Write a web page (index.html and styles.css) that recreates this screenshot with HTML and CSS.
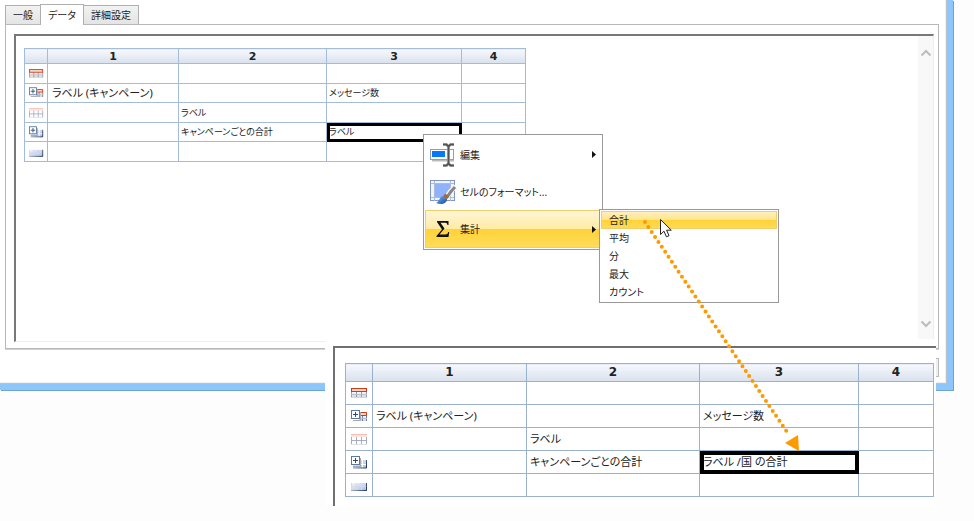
FILE: index.html
```html
<!DOCTYPE html>
<html lang="ja">
<head>
<meta charset="utf-8">
<title>データ</title>
<link rel="stylesheet" href="styles.css">
</head>
<body>
<svg class="defs" aria-hidden="true">
  <defs>
    <linearGradient id="fade" x1="0" y1="0" x2="0" y2="1"><stop offset="0" stop-color="#fff"/><stop offset="1" stop-color="#d4d4d6"/></linearGradient>
    <linearGradient id="navy" gradientUnits="userSpaceOnUse" x1="0" y1="3" x2="16" y2="12"><stop offset="0" stop-color="#d5dbe6"/><stop offset="1" stop-color="#1c3158"/></linearGradient>
    <linearGradient id="cells" x1="0" y1="0" x2="1" y2="1"><stop offset="0" stop-color="#f4f6fb"/><stop offset="1" stop-color="#a3b9ea"/></linearGradient>
    <linearGradient id="brush" x1="0" y1="0" x2="1" y2="1"><stop offset="0" stop-color="#7eb2ed"/><stop offset="1" stop-color="#164d9e"/></linearGradient>
    <g id="plus">
      <path d="M2 10.500h7.500V2" fill="none" stroke="#a4a7ae"/>
      <rect x="0.500" y="0.500" width="8" height="8" fill="#fff" stroke="#5c789c"/>
      <path d="M2 4.500h5M4.500 2v5" stroke="#304b74"/>
    </g>
    <symbol id="i-head" viewBox="0 0 17 13">
      <path d="M0 4h16v7H0z" fill="url(#fade)"/><path d="M.5 4v6M5.500 4v6M10.500 4v6M15.500 4v6" stroke="#8c9ab8" fill="none"/><path d="M0 7.500h16" stroke="#b9c0cf"/>
      <rect x="0.500" y="1.500" width="15" height="3" fill="#fbd5c8" stroke="#d43a10"/>
    </symbol>
    <symbol id="i-grouphead" viewBox="0 0 17 13">
      <path d="M8 5h8v6H8z" fill="url(#fade)"/><path d="M11.500 5v6M15.500 5v6" stroke="#6f82a8" fill="none"/><path d="M8 8.500h8" stroke="#b9c0cf"/>
      <path d="M8 2.500h7.500v3H8" fill="#fbd5c8" stroke="#d43a10"/>
      <use href="#plus"/>
    </symbol>
    <symbol id="i-detail" viewBox="0 0 17 13">
      <path d="M0 1.500h16" stroke="#f4bdb4"/><path d="M0 3h16" stroke="#fbe4df" stroke-width="2"/>
      <path d="M.5 4v8M5.500 4v8M10.500 4v8M15.500 4v8M0 7.500h16" stroke="#a5aec1" fill="none"/><path d="M0 11.500h16" stroke="#dfe2e9"/>
    </symbol>
    <symbol id="i-groupfoot" viewBox="0 0 17 13">
      <path d="M2 4h14v8H2z" fill="url(#cells)"/><path d="M11.500 4v8M6 8.500h10" stroke="#fff"/><path d="M2 12h13.500V4" fill="none" stroke="url(#navy)" stroke-width="1"/>
      <use href="#plus"/>
    </symbol>
    <symbol id="i-foot" viewBox="0 0 17 13">
      <path d="M0 4h16v8H0z" fill="url(#cells)"/><path d="M.5 4v8M5.500 4v8M10.500 4v8M0 7.500h16" stroke="#d5dae4" fill="none"/><path d="M0 11.500h15.500V4" fill="none" stroke="url(#navy)"/>
    </symbol>
  </defs>
</svg>

<main class="stage">
  <section class="window">
    <nav class="tabs">
      <button class="tab" type="button">一般</button>
      <button class="tab tab-active" type="button">データ</button>
      <button class="tab" type="button">詳細設定</button>
    </nav>
    <div class="panel">
      <div class="editor">
        <table class="grid">
          <colgroup><col class="c-icon"><col class="c-one"><col class="c-two"><col class="c-three"><col class="c-four"></colgroup>
          <thead><tr><th></th><th>1</th><th>2</th><th>3</th><th>4</th></tr></thead>
          <tbody>
            <tr><td class="mark"><svg><use href="#i-head"/></svg></td><td></td><td></td><td></td><td></td></tr>
            <tr><td class="mark"><svg><use href="#i-grouphead"/></svg></td><td class="large">ラベル (キャンペーン)</td><td></td><td>メッセージ数</td><td></td></tr>
            <tr><td class="mark"><svg><use href="#i-detail"/></svg></td><td></td><td>ラベル</td><td></td><td></td></tr>
            <tr><td class="mark"><svg><use href="#i-groupfoot"/></svg></td><td></td><td>キャンペーンごとの合計</td><td class="selected">ラベル</td><td></td></tr>
            <tr><td class="mark"><svg><use href="#i-foot"/></svg></td><td></td><td></td><td></td><td></td></tr>
          </tbody>
        </table>
        <div class="scrollbar">
          <button type="button" aria-label="上へ"><svg viewBox="0 0 12 8"><path d="M1.500 6.500 6 2l4.500 4.500"/></svg></button>
          <button type="button" aria-label="下へ"><svg viewBox="0 0 12 8"><path d="M1.500 1.500 6 6l4.500-4.500"/></svg></button>
        </div>
      </div>
    </div>
    <div class="actions"><button type="button" aria-label="OK"></button></div>
  </section>

  <section class="result">
    <div class="result-frame">
      <table class="grid grid-big">
        <colgroup><col class="c-icon"><col class="c-one"><col class="c-two"><col class="c-three"><col class="c-four"></colgroup>
        <thead><tr><th></th><th>1</th><th>2</th><th>3</th><th>4</th></tr></thead>
        <tbody>
          <tr><td class="mark"><svg><use href="#i-head"/></svg></td><td></td><td></td><td></td><td></td></tr>
          <tr><td class="mark"><svg><use href="#i-grouphead"/></svg></td><td>ラベル (キャンペーン)</td><td></td><td>メッセージ数</td><td></td></tr>
          <tr><td class="mark"><svg><use href="#i-detail"/></svg></td><td></td><td>ラベル</td><td></td><td></td></tr>
          <tr><td class="mark"><svg><use href="#i-groupfoot"/></svg></td><td></td><td>キャンペーンごとの合計</td><td class="selected">ラベル /国 の合計</td><td></td></tr>
          <tr><td class="mark"><svg><use href="#i-foot"/></svg></td><td></td><td></td><td></td><td></td></tr>
        </tbody>
      </table>
    </div>
  </section>

  <div class="menu">
    <button class="menu-item" type="button">
      <svg class="menu-icon" viewBox="0 0 28 28"><path d="M3 19.500h22" stroke="#bbb" stroke-width="2"/><rect x="1.500" y="8.500" width="23" height="10" fill="#fff" stroke="#8d9cc0"/><rect x="3" y="10" width="13" height="6" fill="#0879f5"/><path d="M14 3.500h3.500l2 2 2-2H25M19.500 5v18M14 24.500h3.500l2-2 2 2H25" fill="none" stroke="#ccc" stroke-width="3"/><path d="M14 3.500h3.500l2 2 2-2H25M19.500 5v18M14 24.500h3.500l2-2 2 2H25" fill="none" stroke="#555" stroke-width="2"/></svg>
      <span>編集</span>
      <svg class="more" viewBox="0 0 4 7"><path d="M0 0l4 3.500L0 7z"/></svg>
    </button>
    <button class="menu-item" type="button">
      <svg class="menu-icon" viewBox="0 0 28 28"><rect x="1.500" y="2.500" width="24" height="20" fill="#eef5ff" stroke="#8296c0"/><path d="M5.500 3v20M21.500 3v20M2 5.500h23M2 19.500h23" stroke="#a9bbe2" fill="none"/><rect x="6" y="6" width="15" height="13" fill="#8fb2fa"/><path d="M27 9c-5 3-8 7-9 11" fill="none" stroke="#f4f4f4" stroke-width="5"/><path d="M26 9c-3 3-6 7-8 10" fill="none" stroke="#858585" stroke-width="3"/><path d="M15 17l4 3" stroke="#a66b32" stroke-width="4"/><path d="M13 18c-3 2-2 5-6 7 5 2 11 1 11-4z" fill="url(#brush)"/></svg>
      <span>セルのフォーマット...</span>
    </button>
    <button class="menu-item menu-item-active" type="button">
      <svg class="menu-icon" viewBox="0 0 28 28"><path d="M8 6h11.500v4h-1c-.4-1.600-1-2.200-2.600-2.200H11.500l4 5.700-5 6h6c1.600 0 2.200-.8 2.800-2.500h.9l-.7 5H7.500v-1l5.500-6.500L8 7z" fill="#111"/></svg>
      <span>集計</span>
      <svg class="more" viewBox="0 0 4 7"><path d="M0 0l4 3.500L0 7z"/></svg>
    </button>
  </div>

  <div class="submenu">
    <button class="submenu-item submenu-item-active" type="button">合計</button>
    <button class="submenu-item" type="button">平均</button>
    <button class="submenu-item" type="button">分</button>
    <button class="submenu-item" type="button">最大</button>
    <button class="submenu-item" type="button">カウント</button>
  </div>

  <svg class="pointer-trail" viewBox="0 0 160 240" aria-hidden="true">
    <path d="M5 12 149 225" stroke="#ff9900" stroke-width="4" stroke-linecap="round" stroke-dasharray="0 6" fill="none"/>
    <path d="M145 233 158 225 159 241z" fill="#ff9900"/>
    <path d="M20.500 9.500v15l3.500-3.300 2.400 5.600 2.600-1.100-2.400-5.500h4.700z" fill="#fff" stroke="#222"/>
  </svg>
</main>
</body>
</html>
```
FILE: styles.css
```css
* { box-sizing: border-box; }

body {
  margin: 0;
  background: #fdfdfd;
  color: #222;
  font: 10px/16px "Noto Sans", "Noto Sans CJK JP", sans-serif;
  font-feature-settings: "palt";
}

button {
  margin: 0;
  padding: 0;
  border: 0;
  background: none;
  color: inherit;
  font: inherit;
  font-feature-settings: inherit;
}

svg { display: block; }
.defs { position: absolute; width: 0; height: 0; }
.stage { position: relative; min-height: 100vh; }

.window {
  margin-right: 21px;
  padding: 4px 8px 7px 5px;
  border: solid #8cc6fa;
  border-width: 0 6px 6px 0;
  background: #fff;
  box-shadow: 1px 1px #6fa3d0, inset -1px -1px #b5c2d0, inset -2px -2px #f0f0f0;
}

.tabs { display: flex; align-items: flex-end; }
.tab {
  height: 19px;
  padding: 0 7px;
  border: 1px solid #b0b0b0;
  border-bottom: 0;
  background: linear-gradient(#f2f2f2, #e4e4e4);
}
.tab-active {
  position: relative;
  height: 21px;
  margin: 0 -1px -1px;
  background: #fff;
}

.panel {
  padding: 9px 4px 6px 8px;
  border: 1px solid #b8b8b8;
  box-shadow: 0 1px #d2d2d2;
}
.editor {
  display: flex;
  align-items: flex-start;
  justify-content: space-between;
  border-top: 2px solid #787878;
  border-left: 2px solid #787878;
  border-bottom: 1px solid #eee;
  border-right: 1px solid #eee;
}

.grid {
  width: 502px;
  margin: 12px 0 0 8px;
  border-collapse: collapse;
  table-layout: fixed;
  font-size: 9px;
}
.grid .c-icon { width: 23px; }
.grid .c-one { width: 131px; }
.grid .c-two { width: 148px; }
.grid .c-three { width: 135px; }
.grid .c-four { width: 64px; }
.grid th, .grid td {
  padding: 0 2px;
  border: 1px solid #a4bcd8;
  white-space: nowrap;
  text-align: left;
}
.grid th {
  height: 15px;
  padding: 0;
  background: linear-gradient(#f6f8fc, #d9e1ed);
  font: bold 11px/13px "DejaVu Sans", sans-serif;
  text-align: center;
}
.grid td { height: 20px; }
.grid tr:nth-child(even) td { height: 19px; }
.grid .large { padding-left: 4px; font-size: 11px; }
.grid .mark { padding: 0 0 0 4px; }
.mark svg { width: 15px; height: 12px; }
.grid .selected { outline: 3px solid #000; outline-offset: -3px; }

.scrollbar {
  display: flex;
  flex-direction: column;
  justify-content: space-between;
  width: 15px;
  height: 305px;
  padding: 13px 0;
  background: #f8f8f8;
}
.scrollbar svg { width: 12px; height: 8px; margin: 0 auto; fill: none; stroke: #bcbcbc; stroke-width: 2; }

.actions { display: flex; justify-content: flex-end; margin-top: 9px; }
.actions button { width: 75px; height: 19px; border: 1px solid #bbb; background: #eee; }

.result {
  position: absolute;
  top: 339px;
  left: 325px;
  padding: 7px 0 0 8px;
  background: #fff;
}
.result-frame {
  padding: 15px 2px 9px 10px;
  border-top: 2px solid #707070;
  border-left: 2px solid #707070;
}
.grid-big { width: 589px; margin: 0; font-size: 11px; }
.grid-big .c-icon { width: 27px; }
.grid-big .c-one { width: 154px; }
.grid-big .c-two { width: 173px; }
.grid-big .c-three { width: 159px; }
.grid-big .c-four { width: 75px; }
.grid-big th, .grid-big td { border-color: #9ab2ce; }
.grid-big td, .grid-big tr:nth-child(even) td { height: 23px; padding: 0 3px; }
.grid-big th { height: 18px; font-size: 12px; }
.grid-big td.mark, .grid-big tr:nth-child(even) td.mark { padding: 0 0 0 5px; }
.grid-big .mark svg { width: 17px; height: 13px; }
.grid-big .selected { outline-width: 4px; outline-offset: -4px; }

.menu {
  position: absolute;
  top: 134px;
  left: 423px;
  width: 180px;
  padding: 1px;
  border: 1px solid #999;
  background: #fff;
}
.menu-item {
  display: flex;
  align-items: center;
  gap: 3px;
  width: 100%;
  height: 37px;
  padding: 0 5px 0 4px;
}
.menu-item-active {
  height: 38px;
  background: linear-gradient(#fff6d8, #ffeba5 49%, #ffd336 50%, #ffdc5c);
  box-shadow: inset 0 0 0 1px #efcd71;
}
.menu-icon { width: 28px; height: 28px; }
.more { width: 4px; height: 7px; margin-left: auto; fill: #111; }

.submenu {
  position: absolute;
  top: 209px;
  left: 599px;
  width: 180px;
  padding: 1px;
  border: 1px solid #999;
  background: #fff;
}
.submenu-item { display: block; width: 100%; height: 18px; padding: 0 8px; text-align: left; }
.submenu-item-active {
  background: linear-gradient(#fff2c4, #ffe48b 49%, #ffd336 50%, #ffdb57);
  box-shadow: inset 0 0 0 1px #efcd71;
}

.pointer-trail {
  position: absolute;
  top: 210px;
  left: 640px;
  width: 160px;
  height: 240px;
  overflow: visible;
  pointer-events: none;
}
```
